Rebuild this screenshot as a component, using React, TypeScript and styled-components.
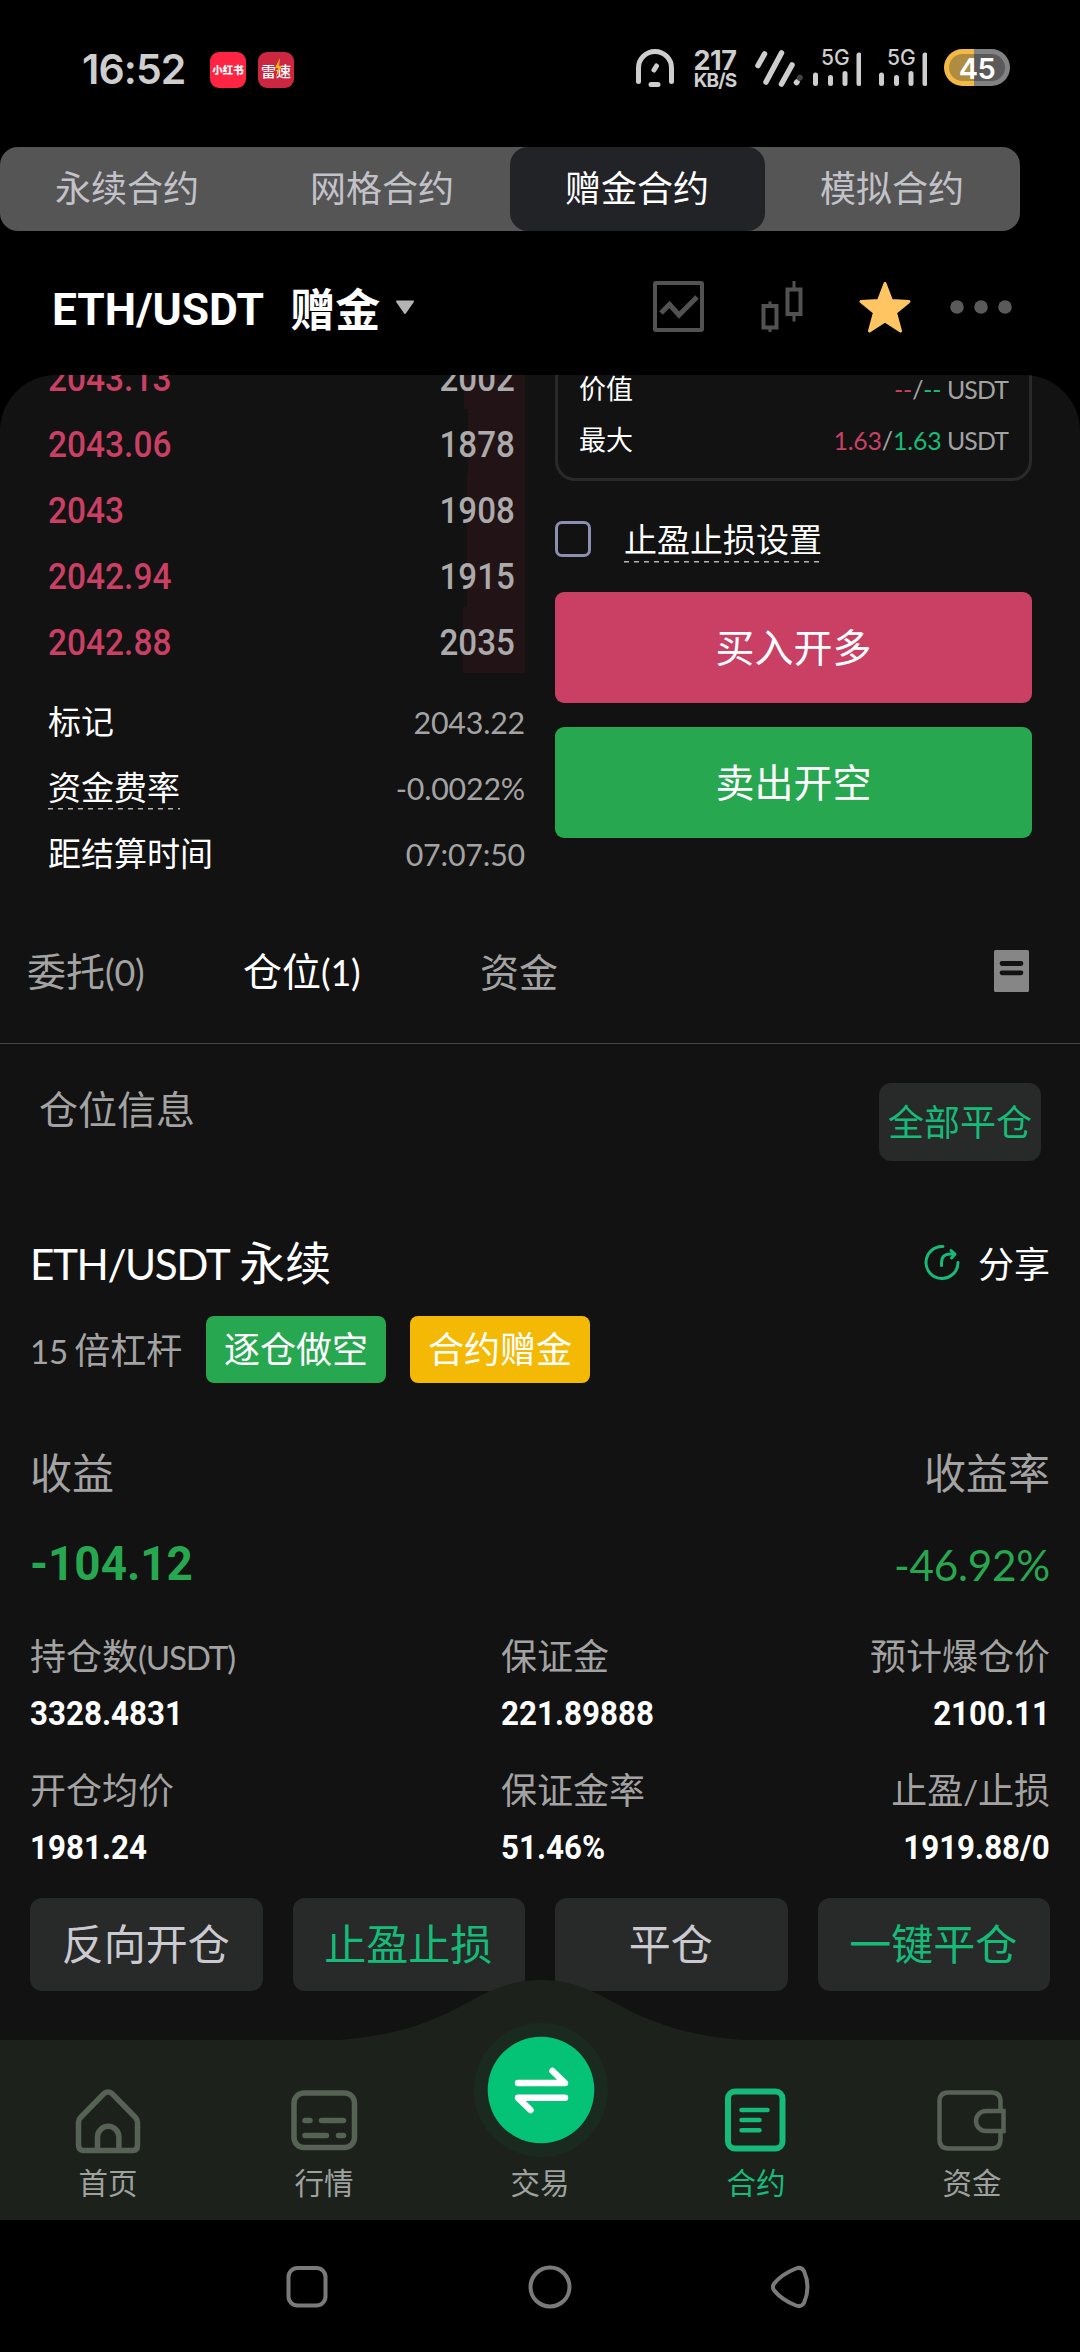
import React from "react";
import styled, { createGlobalStyle, css } from "styled-components";

const CJK = `"Noto Sans CJK SC", "Noto Sans", sans-serif`;
const HUMAN = `Lato, "Noto Sans CJK SC", sans-serif`;
const DIN = `Roboto, "Noto Sans CJK SC", sans-serif`;

const color = {
  panel: "#121212",
  chip: "#282929",
  muted: "#a3a3a3",
  up: "#ca3f64",
  down: "#27a750",
  accent: "#16bb79",
  nav: "#1c211c",
  navIcon: "#566253",
};

const GlobalStyle = createGlobalStyle`
  * { box-sizing: border-box; }
  html, body { margin: 0; background: #000; }
  svg { display: block; flex: none; }
`;

const Screen = styled.div`
  width: 1080px;
  height: 2352px;
  display: flex;
  flex-direction: column;
  overflow: hidden;
  background: #000;
  color: #fff;
  font-family: ${CJK};
  line-height: 1;
  white-space: nowrap;
`;

/* ---------- shared text ---------- */

const Latin = styled.span<{ $color?: string; $caps?: boolean; $gap?: number }>`
  font-family: ${HUMAN};
  font-size: 0.92em;
  letter-spacing: ${(p) => (p.$caps ? "-0.034em" : "-0.006em")};
  margin-right: ${(p) => p.$gap ?? 0}px;
  color: ${(p) => p.$color ?? "inherit"};
`;

const Din = styled.span<{ $size: number; $stretch?: number; $weight?: number; $right?: boolean; $color?: string }>`
  display: inline-block;
  font-family: ${DIN};
  font-size: ${(p) => p.$size}px;
  font-weight: ${(p) => p.$weight ?? 700};
  line-height: 1;
  color: ${(p) => p.$color ?? "#fff"};
  transform: scaleX(${(p) => p.$stretch ?? 1});
  transform-origin: ${(p) => (p.$right ? "right" : "left")} center;
`;

/* ---------- status bar ---------- */

const StatusBar = styled.header`
  height: 147px;
  flex: none;
  padding: 44px 70px 0 82px;
  display: flex;
  align-items: flex-start;
  color: #cecece;
`;

const Clock = styled.time`
  width: 128px;
  height: 50px;
  line-height: 50px;
  font-family: Inter, sans-serif;
  font-weight: 600;
  font-size: 41px;
  letter-spacing: -0.9px;
`;

const Notifications = styled.div`
  display: flex;
  gap: 12px;
  padding-top: 8px;
`;

const AppBadge = styled.span<{ $bg: string; $size: number; $weight: number }>`
  position: relative;
  width: 36px;
  height: 36px;
  border-radius: 9px;
  background: ${(p) => p.$bg};
  color: #fff;
  display: flex;
  align-items: center;
  justify-content: center;
  font-size: ${(p) => p.$size}px;
  font-weight: ${(p) => p.$weight};
`;

const Bolt = styled.svg`
  position: absolute;
  left: 16px;
  top: 6px;
`;

const StatusIcons = styled.div`
  margin-left: auto;
  display: flex;
  align-items: flex-start;
  padding-top: 5px;
`;

const NetSpeed = styled.div`
  width: 46px;
  margin: 0 15px 0 18px;
  display: flex;
  flex-direction: column;
  align-items: center;
  font-family: Inter, sans-serif;
  font-weight: 700;
`;

const SpeedValue = styled.span`
  font-size: 27px;
  line-height: 24px;
  letter-spacing: -0.4px;
`;

const SpeedUnit = styled.span`
  font-size: 19px;
  line-height: 16px;
  letter-spacing: -0.9px;
`;

const Signal = styled.div<{ $left?: number }>`
  position: relative;
  width: 48px;
  height: 38px;
  margin-left: ${(p) => p.$left ?? 18}px;
`;

const SignalLabel = styled.span`
  position: absolute;
  left: 8px;
  top: 0;
  font-family: Inter, sans-serif;
  font-weight: 500;
  font-size: 21px;
  line-height: 18px;
`;

const Battery = styled.div`
  width: 66px;
  height: 37px;
  margin-left: 17px;
  border-radius: 19px;
  display: flex;
  align-items: center;
  justify-content: center;
  background: linear-gradient(90deg, #f2b944 0 30px, #828282 30px);
  padding: 5px;
`;

const BatteryCore = styled.span`
  width: 56px;
  height: 27px;
  border-radius: 14px;
  display: flex;
  align-items: center;
  justify-content: center;
  background: linear-gradient(90deg, #b08c40 0 25px, #5a5a5a 25px);
  color: #fff;
  font-family: Inter, sans-serif;
  font-weight: 600;
  font-size: 29px;
  line-height: 27px;
  padding-top: 2px;
  letter-spacing: -0.5px;
`;

/* ---------- product tabs ---------- */

const ProductTabs = styled.nav`
  width: 1020px;
  height: 84px;
  flex: none;
  display: grid;
  grid-template-columns: repeat(4, 1fr);
  border-radius: 18px;
  background: #555;
`;

const ProductTab = styled.button<{ $active?: boolean }>`
  border: 0;
  padding: 0 1px 6px 0;
  border-radius: 18px;
  background: ${(p) => (p.$active ? "#222327" : "transparent")};
  color: ${(p) => (p.$active ? "#fff" : "#c3c2c9")};
  font: 400 36px/1 ${CJK};
`;

/* ---------- pair header ---------- */

const PairHeader = styled.div`
  height: 144px;
  flex: none;
  padding: 0 68px 0 52px;
  display: flex;
  align-items: center;
`;

const PairName = styled.h1`
  margin: 0;
  display: flex;
  align-items: center;
  padding-top: 12px;
  font-size: 45px;
  font-weight: 700;
`;

const PairKind = styled.span`
  margin: -3px 15px 0 23px;
`;

const Caret = styled.svg`
  margin-bottom: 4px;
`;

const Tools = styled.div`
  margin-left: auto;
  display: flex;
  align-items: center;
`;

const ToolSlot = styled.span<{ $left?: number }>`
  margin-left: ${(p) => p.$left ?? 0}px;
  padding-top: 7px;
`;

/* ---------- panel ---------- */

const Panel = styled.main`
  height: 1665px;
  flex: none;
  display: flex;
  flex-direction: column;
  overflow: hidden;
  border-radius: 56px 56px 0 0;
  background: ${color.panel};
`;

const TradeArea = styled.section`
  height: 520px;
  flex: none;
  display: grid;
  grid-template-columns: 477px 477px;
  column-gap: 30px;
  padding-left: 48px;
`;

const BookColumn = styled.div`
  display: flex;
  flex-direction: column;
  margin-top: -32px;
`;

const BookRow = styled.div`
  position: relative;
  height: 66px;
  display: flex;
  align-items: center;
  justify-content: space-between;
  padding: 5px 10px 0 0;
`;

const Depth = styled.i`
  position: absolute;
  top: 0;
  bottom: 0;
  right: 0;
  background: #221416;
`;

const BookText = styled.span`
  position: relative;
`;

const InfoList = styled.dl`
  margin: 15px 0 0;
`;

const InfoRow = styled.div`
  height: 66px;
  display: flex;
  align-items: center;
  justify-content: space-between;
  font-size: 33px;
`;

const dashed = css`
  background: repeating-linear-gradient(90deg, #b5b5b5 0 5px, transparent 5px 10px) left bottom / 100% 1.5px no-repeat;
`;

const InfoLabel = styled.dt<{ $dashed?: boolean }>`
  height: 44px;
  line-height: 40px;
  margin-top: 1px;
  ${(p) => p.$dashed && dashed}
`;

const InfoValue = styled.dd`
  margin: 0;
  padding-bottom: 1px;
  color: ${color.muted};
`;

const OrderColumn = styled.div`
  display: flex;
  flex-direction: column;
`;

const QuoteBox = styled.div`
  margin-top: -12px;
  height: 118px;
  border: 3px solid #2a2a2a;
  border-top: 0;
  border-radius: 0 0 20px 20px;
  padding: 0 21px 13px;
`;

const QuoteRow = styled.div`
  height: 51px;
  display: flex;
  align-items: center;
  justify-content: space-between;
  font-size: 27px;
  padding-bottom: 2px;
`;

const QuoteValue = styled.span`
  color: ${color.muted};
`;

const StopRow = styled.label`
  margin-top: 40px;
  height: 36px;
  display: flex;
  align-items: center;
  font-size: 33px;
`;

const CheckBox = styled.span`
  width: 36px;
  height: 36px;
  border: 3px solid #8d8fb1;
  border-radius: 7px;
  margin-right: 33px;
`;

const StopLabel = styled.span`
  height: 44px;
  line-height: 38px;
  margin-top: 3px;
  ${dashed}
`;

const OrderButton = styled.button<{ $bg: string; $top: number }>`
  margin-top: ${(p) => p.$top}px;
  height: 111px;
  border: 0;
  border-radius: 9px;
  padding: 0 0 4px;
  background: ${(p) => p.$bg};
  color: #fff;
  font: 400 39px/1 ${CJK};
`;

/* ---------- record tabs ---------- */

const RecordTabs = styled.nav`
  height: 149px;
  flex: none;
  padding: 2px 51px 0 27px;
  display: flex;
  align-items: center;
  border-bottom: 1px solid #464646;
`;

const RecordTab = styled.span<{ $active?: boolean; $width?: number }>`
  width: ${(p) => (p.$width ? `${p.$width}px` : "auto")};
  font-size: 39px;
  color: ${(p) => (p.$active ? "#fff" : color.muted)};
`;

const RecordIcon = styled.span`
  margin-left: auto;
  padding-top: 2px;
`;

const PositionHead = styled.div`
  height: 159px;
  flex: none;
  padding: 39px 39px 0 39px;
  display: flex;
  justify-content: space-between;
  align-items: flex-start;
  font-size: 39px;
  color: ${color.muted};
`;

const HeadTitle = styled.span`
  padding-top: 5px;
`;

const CloseAll = styled.button`
  width: 162px;
  height: 78px;
  border: 0;
  border-radius: 12px;
  padding: 0 0 5px;
  background: ${color.chip};
  color: ${color.accent};
  font: 400 36px/1 ${CJK};
`;

/* ---------- position card ---------- */

const Position = styled.section`
  padding: 0 30px;
  display: flex;
  flex-direction: column;
`;

const Line = styled.div<{ $height: number }>`
  height: ${(p) => p.$height}px;
  display: flex;
  align-items: center;
  justify-content: space-between;
`;

const PositionPair = styled.h2`
  margin: 0;
  font-size: 46px;
  font-weight: 400;
`;

const Share = styled.span`
  display: flex;
  align-items: center;
  gap: 18px;
  font-size: 36px;
`;

const LeverageLine = styled.div`
  height: 67px;
  margin-top: -4px;
  display: flex;
  align-items: center;
`;

const Leverage = styled.span`
  width: 176px;
  font-size: 36px;
  color: ${color.muted};
`;

const Tag = styled.span<{ $bg: string }>`
  width: 180px;
  height: 67px;
  margin-right: 24px;
  border-radius: 8px;
  background: ${(p) => p.$bg};
  font-size: 36px;
  line-height: 62px;
  text-align: center;
`;

const PnlLabels = styled(Line)`
  margin-top: 61px;
  font-size: 42px;
  color: ${color.muted};
`;

const PnlValues = styled(Line)`
  margin-top: 35px;
  color: ${color.down};
`;

const Profit = styled.span`
  padding-top: 2px;
`;

const Rate = styled.span`
  font-size: 46px;
  padding-bottom: 3px;
`;

const Stats = styled.div`
  margin-top: 35px;
  display: grid;
  grid-template-columns: 471px 1fr auto;
  row-gap: 26px;
`;

const Stat = styled.div<{ $right?: boolean }>`
  height: 108px;
  display: flex;
  flex-direction: column;
  justify-content: space-between;
  align-items: ${(p) => (p.$right ? "flex-end" : "flex-start")};
`;

const StatLabel = styled.span`
  height: 48px;
  font-size: 36px;
  line-height: 48px;
  color: ${color.muted};

  ${Latin} {
    line-height: 1;
  }
`;

const StatValue = styled.span`
  height: 48px;
  display: flex;
  align-items: center;
`;

const Actions = styled.div`
  margin-top: 26px;
  display: grid;
  grid-template-columns: repeat(4, 1fr);
  gap: 30px;
`;

const Action = styled.button<{ $accent?: boolean }>`
  height: 93px;
  border: 0;
  border-radius: 12px;
  padding: 0 1px 6px 0;
  background: ${color.chip};
  color: ${(p) => (p.$accent ? color.accent : "#cacad0")};
  font: 400 42px/1 ${CJK};
`;

/* ---------- bottom navigation ---------- */

const BottomNav = styled.nav`
  position: relative;
  height: 180px;
  flex: none;
  display: grid;
  grid-template-columns: repeat(5, 216px);
  grid-template-rows: 180px;
  background: ${color.nav};
`;

const Bump = styled.svg`
  position: absolute;
  left: 0;
  top: -60px;
`;

const NavItem = styled.a<{ $active?: boolean }>`
  position: relative;
  display: flex;
  flex-direction: column;
  align-items: center;
  justify-content: flex-end;
  padding-bottom: 24px;
  font-size: 29.5px;
  color: ${(p) => (p.$active ? color.accent : "#9fa19f")};
`;

const NavGlyph = styled.span<{ $raised?: boolean }>`
  height: ${(p) => (p.$raised ? 134 : 70)}px;
  margin: ${(p) => (p.$raised ? "0 0 10px 2px" : "0 0 11px")};
`;

const SystemNav = styled.footer`
  height: 132px;
  flex: none;
  padding: 45px 0 0 285px;
  display: flex;
  gap: 199px;
  align-items: flex-start;
`;

/* ---------- data ---------- */

const products = ["永续合约", "网格合约", "赠金合约", "模拟合约"];

const asks = [
  { price: "2043.13", amount: 2002 },
  { price: "2043.06", amount: 1878 },
  { price: "2043", amount: 1908 },
  { price: "2042.94", amount: 1915 },
  { price: "2042.88", amount: 2035 },
];
const maxAmount = 2035;
const maxDepth = 62;

const market = [
  { label: "标记", value: "2043.22" },
  { label: "资金费率", value: "-0.0022%", dashed: true },
  { label: "距结算时间", value: "07:07:50" },
];

const quotes = [
  { label: "价值", up: "--", down: "--" },
  { label: "最大", up: "1.63", down: "1.63" },
];

const stats: { label: React.ReactNode; value: string; right?: boolean }[] = [
  { label: <>持仓数<Latin $caps>(USDT)</Latin></>, value: "3328.4831" },
  { label: "保证金", value: "221.89888" },
  { label: "预计爆仓价", value: "2100.11", right: true },
  { label: "开仓均价", value: "1981.24" },
  { label: "保证金率", value: "51.46%" },
  { label: <>止盈<Latin>/</Latin>止损</>, value: "1919.88/0", right: true },
];

/* ---------- icons ---------- */

const ArchIcon = () => (
  <svg width="38" height="40" viewBox="0 0 38 40" fill="none" stroke="#cecece" strokeWidth="5" strokeLinecap="round">
    <path d="M2.500 32.500V19a16.500 16.500 0 0 1 33 0V32.500M15 35.500h7M18 21l2.500-4" />
  </svg>
);

const SlashesIcon = () => (
  <svg width="52" height="40" viewBox="0 0 52 40" fill="none" stroke="#cecece" strokeWidth="5.500" strokeLinecap="round">
    <path d="M5 16.500L11.500 5M13 33L28.500 4M28.500 35L39 16M43.500 33.500L44 33" />
    <path d="M46.500 29L47 28.500" stroke="#444" />
  </svg>
);

const SignalBars = () => (
  <svg width="48" height="38" viewBox="0 0 48 38" stroke="#cecece" strokeWidth="5" strokeLinecap="round">
    <path d="M2.500 26v8.500M17.500 28.500v6M32 24.500v10M46 6v28.500" />
  </svg>
);

const HomeIcon = () => (
  <svg width="70" height="70" viewBox="0 0 70 70" fill="none" stroke={color.navIcon} strokeWidth="5.500">
    <path d="M31 7.500Q35 4.500 39 7.500L62 31Q64.500 33.500 64.500 36V59Q64.500 64.500 60 64.500H10Q5.500 64.500 5.500 59V36Q5.500 33.500 8 31Z" />
    <path d="M24.500 64V51a10.700 10.700 0 0 1 21.400 0V64" />
  </svg>
);

const MarketIcon = () => (
  <svg width="70" height="70" viewBox="0 0 70 70" fill="none" stroke={color.navIcon} strokeWidth="5.500" strokeLinecap="round">
    <rect x="5" y="7" width="60.500" height="54.500" rx="10" />
    <path d="M16 34.500h5M32.500 34.500h22M16 49.500h21.500M49.500 49.500h5" />
  </svg>
);

const ContractIcon = () => (
  <svg width="70" height="70" viewBox="0 0 70 70" fill="none" stroke={color.accent} strokeWidth="6" strokeLinecap="round">
    <rect x="7" y="5.500" width="54.500" height="57" rx="7" />
    <g strokeWidth="4.500">
      <path d="M20.500 24h26M20.500 34h18M20.500 44.300h18" />
    </g>
  </svg>
);

const WalletIcon = () => (
  <svg width="70" height="70" viewBox="0 0 70 70" fill="none" stroke={color.navIcon} strokeWidth="4.500">
    <path d="M63.500 25V15.500Q63.500 6.500 54.500 6.500H11.500Q2.500 6.500 2.500 15.500V53.500Q2.500 62.500 11.500 62.500H54.500Q63.500 62.500 63.500 53.500V45" />
    <path d="M66.500 25H49a10 10 0 0 0 0 20H66.500Z" />
  </svg>
);

const TradeIcon = () => (
  <svg width="134" height="134" viewBox="0 0 134 134" fill="none">
    <circle cx="67" cy="67" r="67" fill="#1b2a1f" />
    <circle cx="67" cy="67" r="53.300" fill="#05c376" />
    <path
      d="M44 60H91L78.500 48M91 74.800H44L56.500 87"
      stroke="#fff"
      strokeWidth="6.500"
      strokeLinecap="round"
      strokeLinejoin="round"
    />
  </svg>
);

const navItems = [
  { label: "首页", icon: <HomeIcon /> },
  { label: "行情", icon: <MarketIcon /> },
  { label: "交易", icon: <TradeIcon />, raised: true },
  { label: "合约", icon: <ContractIcon />, active: true },
  { label: "资金", icon: <WalletIcon /> },
];

export default function App() {
  return (
    <Screen>
      <GlobalStyle />

      <StatusBar>
        <Clock>16:52</Clock>
        <Notifications>
          <AppBadge $bg="#ff2442" $size={10.5} $weight={900}>小红书</AppBadge>
          <AppBadge $bg="#cd2640" $size={15} $weight={500}>
            雷速
            <Bolt width="9" height="20" viewBox="0 0 9 20">
              <path d="M6 0L1 10H4L2 19L8 8H5Z" fill="#f9b51c" />
            </Bolt>
          </AppBadge>
        </Notifications>
        <StatusIcons>
          <ArchIcon />
          <NetSpeed>
            <SpeedValue>217</SpeedValue>
            <SpeedUnit>KB/S</SpeedUnit>
          </NetSpeed>
          <SlashesIcon />
          <Signal $left={8}>
            <SignalBars />
            <SignalLabel>5G</SignalLabel>
          </Signal>
          <Signal>
            <SignalBars />
            <SignalLabel>5G</SignalLabel>
          </Signal>
          <Battery>
            <BatteryCore>45</BatteryCore>
          </Battery>
        </StatusIcons>
      </StatusBar>

      <ProductTabs>
        {products.map((name) => (
          <ProductTab key={name} $active={name === "赠金合约"}>
            {name}
          </ProductTab>
        ))}
      </ProductTabs>

      <PairHeader>
        <PairName>
          <Din $size={45} $stretch={0.985}>ETH/USDT</Din>
          <PairKind>赠金</PairKind>
          <Caret width="20" height="15" viewBox="0 0 20 15">
            <path d="M2 1.500H18L10 13Z" fill="#b4b4b4" stroke="#b4b4b4" strokeWidth="2" strokeLinejoin="round" />
          </Caret>
        </PairName>
        <Tools>
          <ToolSlot>
            <svg width="51" height="51" viewBox="0 0 51 51" fill="none" stroke="#525252">
              <rect x="2" y="2" width="47" height="47" rx="1" strokeWidth="4" />
              <path d="M8 32L16.500 23.500L26 34L44 16" strokeWidth="5" />
            </svg>
          </ToolSlot>
          <ToolSlot $left={57}>
            <svg width="43" height="51" viewBox="0 0 43 51" fill="none" stroke="#525252" strokeWidth="4">
              <rect x="2.500" y="25" width="13" height="21.500" />
              <rect x="26.500" y="8.500" width="13" height="24.500" />
              <path d="M9 20.500v4M9 47v4M33 0v8M33 33v7.500" strokeWidth="3" />
            </svg>
          </ToolSlot>
          <ToolSlot $left={55}>
            <svg width="52" height="52" viewBox="0 0 52 52" fill="#ffc563" stroke="#ffc563" strokeWidth="3" strokeLinejoin="round">
              <path d="M26 2.500L32.500 19.500L50 20.500L36.500 31.500L41.500 50L26 40L10.500 50L15.500 31.500L2 20.500L19.500 19.500Z" />
            </svg>
          </ToolSlot>
          <ToolSlot $left={39}>
            <svg width="62" height="14" viewBox="0 0 62 14" fill="#5a5a5a">
              <circle cx="7" cy="7" r="6.800" />
              <circle cx="31" cy="7" r="6.800" />
              <circle cx="55" cy="7" r="6.800" />
            </svg>
          </ToolSlot>
        </Tools>
      </PairHeader>

      <Panel>
        <TradeArea>
          <BookColumn>
            {asks.map((a) => (
              <BookRow key={a.price}>
                <Depth style={{ width: (a.amount / maxAmount) * maxDepth }} />
                <BookText>
                  <Din $size={36} $weight={500} $stretch={0.93} $color={color.up}>{a.price}</Din>
                </BookText>
                <BookText>
                  <Din $size={36} $weight={500} $stretch={0.92} $right $color="#acaaaa">{a.amount}</Din>
                </BookText>
              </BookRow>
            ))}
            <InfoList>
              {market.map((m) => (
                <InfoRow key={m.label}>
                  <InfoLabel $dashed={m.dashed}>{m.label}</InfoLabel>
                  <InfoValue>
                    <Latin>{m.value}</Latin>
                  </InfoValue>
                </InfoRow>
              ))}
            </InfoList>
          </BookColumn>

          <OrderColumn>
            <QuoteBox>
              {quotes.map((q) => (
                <QuoteRow key={q.label}>
                  <span>{q.label}</span>
                  <QuoteValue>
                    <Latin $color={color.up}>{q.up}</Latin>
                    <Latin>/</Latin>
                    <Latin $color={color.accent}>{q.down}</Latin>
                    <Latin $caps> USDT</Latin>
                  </QuoteValue>
                </QuoteRow>
              ))}
            </QuoteBox>
            <StopRow>
              <CheckBox />
              <StopLabel>止盈止损设置</StopLabel>
            </StopRow>
            <OrderButton $bg={color.up} $top={35}>买入开多</OrderButton>
            <OrderButton $bg={color.down} $top={24}>卖出开空</OrderButton>
          </OrderColumn>
        </TradeArea>

        <RecordTabs>
          <RecordTab $width={216}>委托<Latin>(0)</Latin></RecordTab>
          <RecordTab $width={237} $active>仓位<Latin>(1)</Latin></RecordTab>
          <RecordTab>资金</RecordTab>
          <RecordIcon>
            <svg width="35" height="42" viewBox="0 0 35 42">
              <rect width="35" height="42" rx="1.500" fill="#868686" />
              <path d="M8 13.500h19M8 22.800h19" stroke="#121212" strokeWidth="4.800" strokeLinecap="round" />
            </svg>
          </RecordIcon>
        </RecordTabs>

        <PositionHead>
          <HeadTitle>仓位信息</HeadTitle>
          <CloseAll>全部平仓</CloseAll>
        </PositionHead>

        <Position>
          <Line $height={117}>
            <PositionPair><Latin $caps $gap={2}>ETH/USDT </Latin>永续</PositionPair>
            <Share>
              <svg width="36" height="36" viewBox="0 0 36 36" fill="none" stroke={color.accent} strokeWidth="3" strokeLinecap="round" strokeLinejoin="round">
                <path d="M19 2.500A16 16 0 1 0 34 18.500" />
                <path d="M17.500 21.500V18.500Q17.500 10 26 10H30M27 6.500L31 10.200L27.500 14" />
              </svg>
              分享
            </Share>
          </Line>
          <LeverageLine>
            <Leverage><Latin $gap={-2}>15 </Latin>倍杠杆</Leverage>
            <Tag $bg={color.down}>逐仓做空</Tag>
            <Tag $bg="#f4b904">合约赠金</Tag>
          </LeverageLine>
          <PnlLabels $height={54}>
            <span>收益</span>
            <span>收益率</span>
          </PnlLabels>
          <PnlValues $height={62}>
            <Profit>
              <Din $size={47.5} $stretch={0.965} $color={color.down}>-104.12</Din>
            </Profit>
            <Rate><Latin>-46.92%</Latin></Rate>
          </PnlValues>
          <Stats>
            {stats.map((s) => (
              <Stat key={s.value} $right={s.right}>
                <StatLabel>{s.label}</StatLabel>
                <StatValue>
                  <Din $size={33.5} $stretch={0.935} $right={s.right}>{s.value}</Din>
                </StatValue>
              </Stat>
            ))}
          </Stats>
          <Actions>
            <Action>反向开仓</Action>
            <Action $accent>止盈止损</Action>
            <Action>平仓</Action>
            <Action $accent>一键平仓</Action>
          </Actions>
        </Position>
      </Panel>

      <BottomNav>
        <Bump width="1080" height="61" viewBox="0 0 1080 61" fill={color.nav}>
          <path d="M318 61C390 59 430 43 465 24C492 9 512 0 541 0C570 0 590 9 617 24C652 43 692 59 764 61Z" />
        </Bump>
        {navItems.map((n) => (
          <NavItem key={n.label} $active={n.active}>
            <NavGlyph $raised={n.raised}>{n.icon}</NavGlyph>
            {n.label}
          </NavItem>
        ))}
      </BottomNav>

      <SystemNav>
        <svg width="44" height="44" viewBox="0 0 44 44" fill="none" stroke="#7a7a7a" strokeWidth="4">
          <rect x="3.500" y="3" width="37" height="37.500" rx="9" />
        </svg>
        <svg width="44" height="44" viewBox="0 0 44 44" fill="none" stroke="#7a7a7a" strokeWidth="4">
          <circle cx="22" cy="22" r="19.500" />
        </svg>
        <svg width="44" height="44" viewBox="-2 0 44 44" fill="none" stroke="#7a7a7a" strokeWidth="4">
          <path d="M23 3.500Q28 1.500 31 6Q38 22 31 38Q28 42.500 23 40.500Q8 34.500 0.800 25Q-1 22 0.800 19Q8 9.500 23 3.500Z" />
        </svg>
      </SystemNav>
    </Screen>
  );
}
